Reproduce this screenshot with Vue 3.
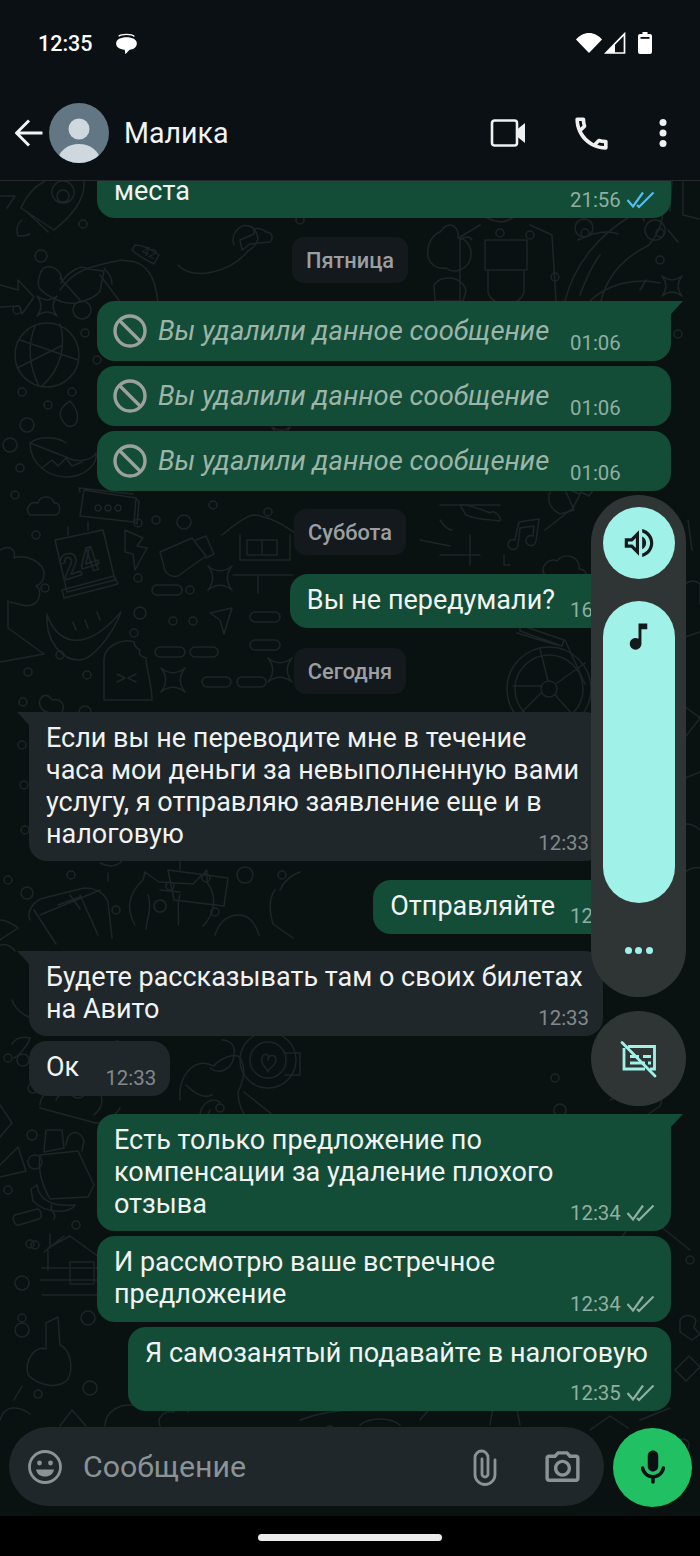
<template>
  <div class="phone">
    <header class="head">
      <div class="status">
        <span class="clock">12:35</span>
        <svg class="notif" width="27" height="27" viewBox="0 0 24 24">
          <path d="M5 5.500c2.500-2 11.500-2.200 14 .2" fill="none" stroke="#fff" stroke-width="1.200" />
          <path d="M12 6.500c5.200 0 9.200 1.900 9.200 5.600 0 3.300-3 5.300-6.700 5.600L11 21.500l-.6-3.900C5.600 17.200 2.800 15.300 2.800 12.100 2.800 8.400 6.800 6.500 12 6.500z" fill="#fff" />
        </svg>
        <span class="spacer"></span>
        <svg width="28" height="22" viewBox="0 0 28 22">
          <path d="M14 21 1 7.500C4.500 3.500 9 1 14 1s9.500 2.500 13 6.500z" fill="#fff" />
        </svg>
        <svg class="signal" width="22" height="22" viewBox="0 0 22 22">
          <path d="M20.500 1.800V21H1.800z" fill="none" stroke="#fff" stroke-width="1.700" />
          <path d="M11 12 11 21H2l9-9z" fill="#fff" />
        </svg>
        <svg class="battery" width="14" height="22" viewBox="0 0 14 22">
          <path d="M4.500 0h5v2H12a2 2 0 0 1 2 2v16a2 2 0 0 1-2 2H2a2 2 0 0 1-2-2V4a2 2 0 0 1 2-2h2.500z" fill="#fff" />
          <rect x="2.500" y="5" width="9" height="1.800" fill="#0b1014" />
        </svg>
      </div>
      <div class="toolbar">
        <svg class="back" width="28" height="28" viewBox="0 0 28 28">
          <path d="M1.500 14H27.500M14 1.500 1.500 14 14 26.500" fill="none" stroke="#f1f3f4" stroke-width="3" />
        </svg>
        <svg class="avatar" width="60" height="60" viewBox="0 0 60 60">
          <defs><clipPath id="ava"><circle cx="30" cy="30" r="30" /></clipPath></defs>
          <circle cx="30" cy="30" r="30" fill="#627683" />
          <circle cx="30" cy="26" r="10.500" fill="#cfd8df" />
          <ellipse cx="30" cy="58" rx="21" ry="17" fill="#cfd8df" clip-path="url(#ava)" />
        </svg>
        <span class="name">Малика</span>
        <span class="spacer"></span>
        <svg width="36" height="30" viewBox="0 0 36 30">
          <rect x="2" y="2.500" width="25" height="25" rx="2.500" fill="none" stroke="#eef0f1" stroke-width="2.600" />
          <path d="M27 11.500 35 5v20l-8-6.500z" fill="#eef0f1" />
        </svg>
        <svg class="phone-ico" width="43" height="43" viewBox="0 0 24 24">
          <path fill="#eef0f1" d="M6.540 5c.06.890.210 1.760.450 2.590l-1.200 1.200c-.410-1.200-.670-2.470-.760-3.790h1.510m9.860 12.020c.850.240 1.720.390 2.600.450v1.490c-1.320-.090-2.590-.350-3.800-.750l1.200-1.190M7.500 3H4c-.550 0-1 .450-1 1 0 9.390 7.610 17 17 17 .550 0 1-.450 1-1v-3.490c0-.550-.450-1-1-1-1.240 0-2.450-.200-3.570-.570-.100-.040-.210-.050-.310-.050-.260 0-.510.100-.710.290l-2.200 2.200c-2.830-1.450-5.150-3.760-6.590-6.590l2.200-2.200c.280-.280.360-.670.250-1.020C8.700 6.450 8.500 5.250 8.500 4c0-.550-.450-1-1-1z" />
        </svg>
        <svg class="more" width="10" height="30" viewBox="0 0 10 30">
          <circle cx="5" cy="4.500" r="3.500" fill="#eef0f1" />
          <circle cx="5" cy="15" r="3.500" fill="#eef0f1" />
          <circle cx="5" cy="25.500" r="3.500" fill="#eef0f1" />
        </svg>
      </div>
    </header>

    <main class="chat">
      <!-- обои: координаты совпадают с экраном -->
      <svg class="wall" width="700" height="1335" viewBox="0 181 700 1335">
        <g fill="none" stroke="#1e2527" stroke-width="1.500" stroke-linejoin="round" stroke-linecap="round">
          <circle v-for="(c, i) in dots" :key="'d' + i" :cx="c[0]" :cy="c[1]" :r="c[2]" />
          <rect v-for="(p, i) in pills" :key="'p' + i" :x="p[0]" :y="p[1]" :width="p[2]" height="10" rx="5" />
          <path v-for="(s, i) in sparks" :key="'s' + i" :d="sparkPath(s)" />
          <path v-for="(d, i) in doodles" :key="'o' + i" :d="d" />
          <text x="62" y="575" class="wall-num" transform="rotate(-18 80 570)">24</text>
          <text x="143" y="257" class="wall-small" transform="rotate(22 150 250)">42</text>
        </g>
      </svg>

      <div class="list">
        <template v-for="(m, i) in messages" :key="i">
          <div v-if="m.chip" class="chip" :class="m.gap">{{ m.chip }}</div>
          <div v-else class="bubble" :class="[m.from, m.gap, m.mod, { tail: m.tail }]">
            <svg v-if="m.deleted" class="ban" width="36" height="36" viewBox="0 0 36 36">
              <circle cx="18" cy="18" r="15" fill="none" stroke="#9aa19e" stroke-width="3.400" />
              <path d="M7.500 7.500 28.500 28.500" stroke="#9aa19e" stroke-width="3.400" />
            </svg>
            <span class="text" :class="{ del: m.deleted }">{{ m.text }}</span>
            <span class="meta">
              {{ m.time }}
              <svg v-if="m.ticks" class="ticks" width="30" height="20" viewBox="0 0 30 20">
                <path d="M1.500 10 7 16.500 17 2.500M11 15 13 17 27.500 2.500" fill="none" :stroke="m.ticks" stroke-width="2.200" />
              </svg>
            </span>
          </div>
        </template>
      </div>

      <div class="composer">
        <div class="field">
          <svg width="36" height="36" viewBox="0 0 36 36">
            <circle cx="18" cy="18" r="15.500" fill="none" stroke="#8b9396" stroke-width="2.800" />
            <circle cx="12.500" cy="14" r="2.400" fill="#8b9396" />
            <circle cx="23.500" cy="14" r="2.400" fill="#8b9396" />
            <path d="M9 20.500h18c-.8 4.500-4.300 7-9 7s-8.200-2.500-9-7z" fill="#8b9396" />
          </svg>
          <span class="placeholder">Сообщение</span>
          <span class="spacer"></span>
          <svg class="clip" width="28" height="38" viewBox="0 0 28 38">
            <path d="M24 12v14.500a10 10 0 0 1-20 0V9.500a6.500 6.500 0 0 1 13 0V26a3 3 0 0 1-6 0V11" fill="none" stroke="#8b9396" stroke-width="2.800" stroke-linecap="round" />
          </svg>
          <svg class="cam" width="41" height="41" viewBox="0 0 24 24">
            <path fill="#8b9396" d="M20 5h-3.170L15 3H9L7.170 5H4c-1.100 0-2 .9-2 2v12c0 1.100.9 2 2 2h16c1.100 0 2-.9 2-2V7c0-1.100-.9-2-2-2zm0 14H4V7h4.050l1.830-2h4.240l1.830 2H20v12zM12 8c-2.760 0-5 2.240-5 5s2.240 5 5 5 5-2.240 5-5-2.240-5-5-5zm0 8c-1.650 0-3-1.350-3-3s1.350-3 3-3 3 1.350 3 3-1.350 3-3 3z" />
          </svg>
        </div>
        <button class="mic">
          <svg width="42" height="42" viewBox="0 0 24 24">
            <path fill="#0b1014" d="M12 14c1.660 0 3-1.340 3-3V5c0-1.660-1.340-3-3-3S9 3.340 9 5v6c0 1.660 1.340 3 3 3zm5.910-3c-.490 0-.9.360-.980.850C16.520 14.200 14.470 16 12 16s-4.520-1.800-4.930-4.150c-.080-.490-.490-.850-.980-.850-.610 0-1.090.540-1 1.140.490 3 2.890 5.350 5.910 5.780V20c0 .550.450 1 1 1s1-.450 1-1v-2.080c3.020-.430 5.420-2.780 5.910-5.780.100-.6-.390-1.140-1-1.140z" />
          </svg>
        </button>
      </div>
    </main>

    <footer class="nav"><span class="pill"></span></footer>

    <!-- панель громкости поверх чата -->
    <aside class="volume">
      <div class="panel">
        <div class="round">
          <svg width="38" height="38" viewBox="0 0 24 24">
            <path fill="#14191c" d="M3 9v6h4l5 5V4L7 9H3zm7-.170v6.340L7.830 13H5v-2h2.830L10 8.830zM16.500 12c0-1.770-1.020-3.290-2.500-4.030v8.050c1.480-.730 2.500-2.250 2.500-4.020zM14 3.230v2.060c2.890.860 5 3.540 5 6.710s-2.110 5.850-5 6.710v2.060c4.010-.910 7-4.490 7-8.770 0-4.280-2.990-7.860-7-8.770z" />
          </svg>
        </div>
        <div class="slider">
          <svg width="35" height="35" viewBox="0 0 24 24">
            <path fill="#14191c" d="M12 3v10.550c-.590-.340-1.270-.550-2-.550-2.210 0-4 1.790-4 4s1.790 4 4 4 4-1.790 4-4V7h4V3h-6z" />
          </svg>
        </div>
        <div class="dots"><i></i><i></i><i></i></div>
      </div>
      <div class="captions">
        <svg width="40" height="40" viewBox="0 0 40 40">
          <path d="M9 7.500h26.500v22.500H31M25 7.500M5 9v21h21" fill="none" stroke="#a0f2e9" stroke-width="2.800" />
          <path d="M11 17.500h9M11 24h15M24 17.500h8M29 24h3" fill="none" stroke="#a0f2e9" stroke-width="2.800" />
          <path d="M3 3.500 36 37" stroke="#a0f2e9" stroke-width="2.800" stroke-linecap="round" />
        </svg>
      </div>
    </aside>
  </div>
</template>

<script setup>
const BLUE = "#53bdeb";
const GREY = "#8fb0a1";

const messages = [
  { from: "out", text: "места", time: "21:56", ticks: BLUE, mod: "wide" },
  { chip: "Пятница", gap: "g19" },
  { from: "out", deleted: true, text: "Вы удалили данное сообщение", time: "01:06", gap: "g18", tail: true, mod: "wide del-row" },
  { from: "out", deleted: true, text: "Вы удалили данное сообщение", time: "01:06", gap: "g5", mod: "wide del-row" },
  { from: "out", deleted: true, text: "Вы удалили данное сообщение", time: "01:06", gap: "g5", mod: "wide del-row" },
  { chip: "Суббота", gap: "g18" },
  { from: "out", text: "Вы не передумали?", time: "16:10", ticks: GREY, gap: "g19", tail: true, mod: "short" },
  { chip: "Сегодня", gap: "g20" },
  {
    from: "in",
    text: "Если вы не переводите мне в течение\nчаса мои деньги за невыполненную вами\nуслугу, я отправляю заявление еще и в\nналоговую",
    time: "12:33",
    gap: "g18",
    tail: true,
    mod: "wide",
  },
  { from: "out", text: "Отправляйте", time: "12:33", ticks: GREY, gap: "g19", tail: true, mod: "short" },
  { from: "in", text: "Будете рассказывать там о своих билетах\nна Авито", time: "12:33", gap: "g17", tail: true, mod: "wide" },
  { from: "in", text: "Ок", time: "12:33", gap: "g5", mod: "ok" },
  {
    from: "out",
    text: "Есть только предложение по\nкомпенсации за удаление плохого\nотзыва",
    time: "12:34",
    ticks: GREY,
    gap: "g18",
    tail: true,
    mod: "wide",
  },
  { from: "out", text: "И рассмотрю ваше встречное\nпредложение", time: "12:34", ticks: GREY, gap: "g5", mod: "wide two" },
  { from: "out", text: "Я самозанятый подавайте в налоговую", time: "12:35", ticks: GREY, gap: "g5", mod: "own-row" },
];

// кружки на обоях: x, y, r
const dots = [
  [83, 224, 4], [41, 256, 6], [17, 310, 4], [82, 310, 9], [85, 333, 4], [97, 360, 4], [22, 392, 4], [72, 392, 4], [48, 405, 4],
  [27, 425, 7], [10, 445, 7], [20, 468, 4], [15, 495, 4], [36, 535, 4], [45, 588, 4], [138, 523, 4], [184, 522, 7], [156, 520, 4],
  [213, 505, 4], [268, 512, 4], [138, 578, 4], [190, 590, 4], [140, 613, 6], [173, 621, 4], [193, 621, 4], [134, 633, 4],
  [60, 655, 4], [87, 675, 4], [85, 712, 6], [28, 672, 4], [23, 702, 4],
  [530, 235, 4], [584, 228, 9], [555, 277, 4], [585, 233, 4], [660, 233, 4], [660, 260, 4], [300, 220, 4], [500, 233, 4], [678, 334, 4],
  [22, 745, 4], [24, 785, 4], [25, 830, 4], [70, 772, 4], [8, 880, 4], [27, 893, 6], [71, 875, 4], [116, 910, 4], [170, 886, 4],
  [206, 878, 4], [245, 875, 8], [215, 912, 4], [282, 875, 4], [117, 1045, 4], [23, 1060, 6], [8, 1058, 4], [57, 1050, 4],
  [33, 1088, 5], [123, 1088, 4], [78, 1090, 8], [32, 1135, 5], [124, 1126, 4], [35, 1162, 7], [8, 1190, 4],
  [30, 1244, 4], [76, 1225, 4], [35, 1245, 4], [22, 1283, 7], [88, 1318, 7], [22, 1318, 4], [90, 1388, 7], [22, 1330, 7],
  [330, 1430, 4], [285, 1290, 4], [560, 1110, 6], [555, 1078, 4], [590, 1270, 4], [690, 1260, 4], [683, 1445, 6], [220, 1108, 4],
];

const pills = [
  [152, 585, 30], [155, 647, 30], [190, 647, 28], [202, 677, 29], [237, 677, 29], [250, 612, 30], [250, 640, 30],
];

const sparks = [
  [47, 306, 10], [220, 578, 12], [173, 680, 12], [281, 436, 9], [672, 286, 10], [280, 670, 12],
];

function sparkPath([x, y, r]) {
  const k = r * 0.22;
  return `M${x - r} ${y - r}Q${x} ${y - k} ${x + r} ${y - r}Q${x + k} ${y} ${x + r} ${y + r}Q${x} ${y + k} ${x - r} ${y + r}Q${x - k} ${y} ${x - r} ${y - r}z`;
}

const doodles = [
  // ракета
  "M84 181c1 18-10 33-30 49L21 208c6-14 14-22 24-27M27 212 48 232M22 220c-5 4-6 10-4 16 5 0 8 0 12-2M0 196l15 0-8 12",
  "M63 181a11 11 0 1 0 .1 0M63 190a6 6 0 1 0 .1 0",
  // стрелка и сердце
  "M0 285l18 5 0-10 16 17-12 17-3-8-19 1M46 267c10-2 18 8 15 16 5-8 18-20 27-14l16 2-4 20c-4 6-14 10-24 12-15 2-30-8-36-14-4-6 0-20 6-22z",
  "M60 278l20 22M104 268c4 4 8 10 8 16",
  // глобус
  "M15 355a32 32 0 1 0 64 0a32 32 0 1 0-64 0M20 340l58 20M17 368l44-22M35 326c-8 20-6 40 4 60M60 324c6 20 2 44-18 62",
  // лампа
  "M30 443c0 22 20 34 36 34 20 0 32-14 30-24-4 8-20 10-30 4l-36-14zM30 443c10-8 28-6 36 0M66 425c-10-10-6-18 4-24 6 6 10 16 6 22-2 4-8 4-10 2zM42 468l10-8 6 6 8-8 6 8 10-4",
  // карточка с точками
  "M84 490l52 8-2 24-54-6zM136 498l3 4-2 22-3-2M80 492l-1-4 54 6",
  "M98 505a3 3 0 1 0 .1 0M108 505a3 3 0 1 0 .1 0M118 505a3 3 0 1 0 .1 0",
  // облако
  "M30 515c-6-6 0-14 8-12 2-8 14-8 16 0 6-2 8 10 2 12z",
  // календарь
  "M55 540l48-10 12 50-48 12zM68 535v-8M88 530v-8M62 590l52-14 4 8-54 14z",
  // молния и банка
  "M125 530l18 8-6 8 10 2-12 22-2-16-8-2zM160 552l32-14 14 18-28 20c-8 2-14-4-14-10zM196 540l10-4 8 18-8 4",
  // хижина
  "M222 535c12-10 26-20 32-20 20 2 36 14 46 22M240 535v25h50v-25M233 575h60M247 540h30v15h-30zM262 540v15M258 575v18",
  // арбуз
  "M47 614c8 26 34 44 74-2-10 26-30 48-42 48-18 0-34-20-32-46zM73 622l3 8M85 620l3 8M97 612l3 8",
  // бумажный самолёт
  "M210 613l22-5-8 26-4-14z",
  // мороженое
  "M104 700v-40c0-14 18-22 30-18 0 4 2 6 6 8-2 4 0 6 6 8 0 10 6 26 6 42zM117 682l8-4-8-4M136 682l-8-4 8-4",
  // дерево и гора слева
  "M0 550c10-6 16 0 14 8 12-4 30 4 30 16 0 6-2 10-8 12 6 4 4 14-2 18-8 4-14 0-24-2M8 600v28l36 26-44 8",
  // ягоды
  "M40 700c4-8 10-4 12 0 8-2 14 4 10 12-2 6-10 4-14 0-6 0-10-8-8-12z",
  // ракушка и прочее сверху
  "M110 181c0 14 6 22 14 28 10-2 24-2 32-14M150 181c0 10 12 24 24 22 10-2 16-10 16-22M230 181l-8 26 30 0-12-14 18-2",
  "M135 245c8 0 16 4 24 10l-5 9c-8-4-16-8-22-14zM60 290c14-20 30-24 62-30 4 2 18-2 28 14 8 12 10 40 8 56",
  "M100 275l30 40c0 8-2 14-4 24M178 265c14 16 52 8 70-14 10-6 14-14 4-24-12-6-22 8-18 18",
  "M240 240l14-6c-2-8 8-6 12-2 6 0 8 6 4 10l-20 2-8 6z",
  // садовник
  "M473 186c-2 16 6 34 28 36 18-2 26-20 26-40M472 200h58M480 225l-20 12v64M530 225l22 10 4 66M485 240h42v30h-42zM488 270v22c4 16 32 16 36 0v-22",
  "M440 232c10-14 20-4 18 6 8 0 16 10 12 22-4 10-16 14-24 8-12 2-20-8-18-18 0-8 6-16 12-18zM434 285c8-12 30-8 32 6l-3 10h-28zM460 240c4-4 10-4 12 0",
  // рыба
  "M565 301c10-40 40-76 88-96 14 0 12 20-4 40-24 12-42 30-48 56M600 255c-8 10-14 24-20 40M650 205c-6 4-8 10-6 16M578 240c16-8 30-10 40-6",
  "M655 220a10 10 0 1 0 .1 0M668 230l10 12",
  "M590 301c16-16 44-24 70-18M640 290l6-10",
  // рука и уголок
  "M683 181v34l16 4M672 181l-2 30M545 530l28-22 8-16 8 4 4-6M570 490l10 4",
  // колесо
  "M507 689a42 42 0 1 0 84 0a42 42 0 1 0-84 0M515 689a34 34 0 1 0 68 0a34 34 0 1 0-68 0M541 689a8 8 0 1 0 16 0a8 8 0 1 0-16 0M548 681l-8-32M557 683l28-20M555 695l20 22M541 693l-24 24M541 686h-28",
  "M517 633l40 12M520 625l44 15-2 6-42-15zM565 640l20 44",
  // ноты и прочее
  "M517 530l2-8 20-3-3 22a5 5 0 1 1-3-5l1-10-14 2-2 17a5 5 0 1 1-3-5zM545 575c-6-8 4-18 12-14 8-10 24-4 22 8 10 0 10 14 2 18l-16-2-8 10zM510 565h-6v-10",
  "M440 520c4 6 8 10 12 10M355 512c-2 8 0 16 6 22M460 505c6-2 20 4 30 8 4-4 12 4 10 8-10-2-20 0-34-6z",
  "M440 505h60M550 492c-4 10 2 18 10 22l14-4-8-18",
  "M420 540l30 6M440 555h40M470 535v30",
  // низ: калькулятор, кот
  "M30 920c-4-8 4-20 14-22l40-10c10 0 20 4 24 14l4 36M34 910l22 34M80 895l18 40M40 915l60-25M58 905l22-8M70 895l10 14",
  "M135 925c-8-14-8-30 8-45l2-8 14 10 34 2 14-14v12c12 16 6 34-4 44M148 895c4 10 0 20-2 34M180 895c-4 10 0 20-2 30M160 890l20 2M160 900a6 6 0 1 0 .1 0",
  "M215 935c4-12 12-20 24-20 8 0 16 6 20 20M275 890c-6 8-6 20-2 34l20 14",
  "M280 890c6-14 20-18 20-18M168 870l60 8-4 28-50-6zM180 860v10M100 863c8 4 16 4 22-2M108 873v8",
  "M0 945c8-2 12 2 15 6M0 920c8 0 18 8 18 8L0 940",
  // низ: бабочка, девушка
  "M12 1000c4 12 18 20 30 20M14 1058c4-2 14-12 16-20-8-2-14 0-18 6",
  "M180 1100c-2-24 14-44 34-34 6-8 22-14 26-8 6 10 4 22-2 34 0 10 4 22 10 26M186 1085c8 8 18 14 26 10M222 1040c8 0 14 6 12 14 0 14-14 22-24 14M200 1116c0-10 10-20 20-14M244 1092l30 24M210 1110l-2 4",
  "M240 1060a28 28 0 1 0 56 0a28 28 0 1 0-56 0M250 1060a18 18 0 1 0 36 0a18 18 0 1 0-36 0M262 1058c2-6 8-4 6 2 0-6 8-6 8 0 0 6-8 8-8 12 0-4-8-6-6-14zM285 1075h15v-22h-15",
  // тако, сумка, банан
  "M40 1105c0-16 30-30 50-22 14 8 16 22 4 32M40 1108l52 14c8 4 22-4 28-14M56 1100c4-8 14-12 24-10",
  "M40 1155l38-4 16 34-6 12-38 2c-8-14-12-30-10-44zM46 1130h16l2 18-20 4zM66 1145c2-16 14-16 18-4l-2 10M37 1185c2 14 14 22 38 20-4 8-28 10-42-4l-2-12z",
  "M0 1105l12 18-12 14M0 1165l18-18 8 24-26 6",
  "M15 1215l22-6c4 0 6 8 2 10l-20 6c-4 2-8-8-4-10zM52 1205c-4 6 6 8 2 14",
  // дом
  "M48 1270v-22l22-12 36 26v18M44 1252l20-16M42 1268h60M40 1280h58M42 1295h60M70 1262h24v22h-24zM50 1248v-14",
  "M110 1280l-10 16h26l-10-22",
  // ключ и бургер
  "M28 1375c-4-16 8-30 18-26l0-26 12-6 2 28c10 4 14 22 8 34-8 10-28 8-40-4zM22 1386l-8 14M38 1390a4 4 0 1 0 .1 0",
  "M0 1420c4-16 20-14 30-6M60 1426l12-16 14 16M105 1426c0-14 14-24 34-20M160 1426c-4-10 6-16 14-14 2-8 12-4 14 0",
  // правый низ
  "M610 1100l30-12c14-6 26 6 20 18l-20 14-30 2M640 1115c-2 8-8 14-16 16",
  "M675 1370l14-14 11 11-14 14zM680 1320c4-6 12-6 16 0l-2 8 6 6-8 6-12-8z",
  "M590 1430l20-14 18 12M640 1420l30-12M360 1425c10-8 30-8 40 0M490 1425l4-24M520 1425l-6-30M420 1420l14-16",
  "M620 1240l20-30 50 40M610 1170c-4 20 0 34 6 44M640 1170c12 0 26 10 30 30M300 1420c20-8 40-10 60-10",
  "M672 830c8-8 20-8 28 0M678 880c6-10 16-14 22-12M680 780l20-8M676 700l24 18-14 18M676 640l24-8M680 590c4-8 14-12 20-6v20M688 520l4 30",
];
</script>

<style scoped>
.phone {
  position: relative;
  width: 700px;
  height: 1556px;
  display: flex;
  flex-direction: column;
  overflow: hidden;
  font-family: Roboto, "Noto Sans", sans-serif;
  background: #000;
}

.spacer {
  flex: 1;
}

/* Шапка */
.head {
  height: 181px;
  flex: none;
  box-sizing: border-box;
  background: #0b1014;
  border-bottom: 1px solid #24292c;
}

.status {
  height: 86px;
  display: flex;
  align-items: center;
  padding-left: 38px;
  padding-right: 48px;
  box-sizing: border-box;
}

.clock {
  color: #fff;
  font-size: 21.500px;
  font-weight: 500;
}

.notif {
  margin-left: 20px;
}

.signal {
  margin-left: 1px;
}

.battery {
  margin-left: 12px;
}

.toolbar {
  height: 94px;
  display: flex;
  align-items: center;
  padding-left: 15px;
  padding-right: 32px;
  box-sizing: border-box;
}

.avatar {
  margin-left: 6px;
}

.name {
  margin-left: 15px;
  color: #f1f3f4;
  font-size: 28.600px;
}

.phone-ico {
  margin-left: 44px;
}

.more {
  margin-left: 45px;
}

/* Чат */
.chat {
  position: relative;
  flex: 1;
  min-height: 0;
  display: flex;
  flex-direction: column;
  justify-content: flex-end;
  overflow: hidden;
  background: #0a1211;
}

.wall {
  position: absolute;
  left: 0;
  top: 0;
}

.wall-num {
  fill: none;
  font-size: 34px;
  font-family: Roboto, sans-serif;
  font-weight: 700;
}

.wall-small {
  font-size: 13px;
  fill: #1e2527;
  stroke: none;
  font-family: Roboto, sans-serif;
}

.list {
  position: relative;
  display: flex;
  flex-direction: column;
}

.chip {
  align-self: center;
  height: 46px;
  padding: 0 14px;
  display: flex;
  align-items: center;
  background: #14191d;
  border-radius: 12px;
  color: #9b9fa2;
  font-size: 21.800px;
  font-weight: 500;
}

.g5 { margin-top: 5px; }
.g17 { margin-top: 17px; }
.g18 { margin-top: 18px; }
.g19 { margin-top: 19px; }
.g20 { margin-top: 20px; }

.bubble {
  position: relative;
  box-sizing: border-box;
  padding: 10px 18px 11px 17px;
  border-radius: 18px;
  color: #f1f3f3;
  font-size: 27px;
  line-height: 32px;
}

.text {
  white-space: pre-line;
}

.out {
  align-self: flex-end;
  margin-right: 29px;
  background: #134d37;
}

.in {
  align-self: flex-start;
  margin-left: 29px;
  background: #1f272a;
}

.wide {
  width: 574px;
}

.two {
  padding-bottom: 12px;
}

.short {
  padding-right: 116px;
  padding-bottom: 12px;
}

.ok {
  padding-right: 91px;
  padding-bottom: 13px;
}

.own-row {
  width: 543px;
  padding-bottom: 42px;
}

.del-row {
  height: 60px;
  display: flex;
  align-items: center;
  padding: 0 0 0 15px;
}

.ban {
  flex: none;
}

.del {
  margin-left: 10px;
  font-size: 27.400px;
  font-style: italic;
  color: #9db5a9;
}

.meta {
  position: absolute;
  right: 15px;
  bottom: 6px;
  height: 24px;
  min-width: 86px;
  display: flex;
  align-items: center;
  font-size: 20.400px;
  line-height: 24px;
  color: #8fb0a1;
  white-space: nowrap;
}

.in .meta {
  right: 14px;
  min-width: 0;
  color: #83898c;
}

.ticks {
  margin-left: 5px;
}

/* Хвостики пузырей */
.tail.out {
  border-top-right-radius: 0;
}

.tail.out::after {
  content: "";
  position: absolute;
  top: 0;
  right: -12px;
  width: 12px;
  height: 13px;
  background: #134d37;
  clip-path: polygon(0 0, 100% 0, 0 100%);
}

.tail.in {
  border-top-left-radius: 0;
}

.tail.in::after {
  content: "";
  position: absolute;
  top: 0;
  left: -12px;
  width: 12px;
  height: 13px;
  background: #1f272a;
  clip-path: polygon(0 0, 100% 0, 100% 100%);
}

/* Поле ввода */
.composer {
  position: relative;
  display: flex;
  gap: 9px;
  margin-top: 16px;
  padding: 0 8px 9px 9px;
}

.field {
  flex: 1;
  height: 79px;
  display: flex;
  align-items: center;
  padding: 0 21px 0 18px;
  background: #1f272a;
  border-radius: 40px;
}

.placeholder {
  margin-left: 20px;
  color: #8b9396;
  font-size: 30.300px;
}

.cam {
  margin-left: 43px;
}

.mic {
  width: 79px;
  height: 79px;
  margin-top: 1px;
  padding: 0;
  display: flex;
  align-items: center;
  justify-content: center;
  border: none;
  border-radius: 50%;
  background: #21c063;
}

/* Системная навигация */
.nav {
  height: 40px;
  flex: none;
  display: flex;
  justify-content: center;
  align-items: center;
  background: #000;
}

.pill {
  width: 184px;
  height: 7px;
  margin-top: 3px;
  border-radius: 4px;
  background: #ececec;
}

/* Панель громкости */
.volume {
  position: absolute;
  left: 591px;
  top: 495px;
  width: 95px;
  display: flex;
  flex-direction: column;
  gap: 14px;
}

.panel {
  height: 502px;
  box-sizing: border-box;
  padding-top: 12px;
  display: flex;
  flex-direction: column;
  align-items: center;
  background: #2f3535;
  border-radius: 48px;
}

.round {
  width: 72px;
  height: 72px;
  display: flex;
  align-items: center;
  justify-content: center;
  border-radius: 50%;
  background: #a0f2e9;
}

.slider {
  width: 72px;
  height: 302px;
  margin-top: 22px;
  padding-top: 18px;
  box-sizing: border-box;
  display: flex;
  justify-content: center;
  border-radius: 36px;
  background: #a0f2e9;
}

.dots {
  margin-top: 44px;
  display: flex;
  gap: 3.500px;
}

.dots i {
  width: 7px;
  height: 7px;
  border-radius: 50%;
  background: #a0f2e9;
}

.captions {
  width: 95px;
  height: 95px;
  display: flex;
  align-items: center;
  justify-content: center;
  border-radius: 50%;
  background: #2f3535;
}
</style>
